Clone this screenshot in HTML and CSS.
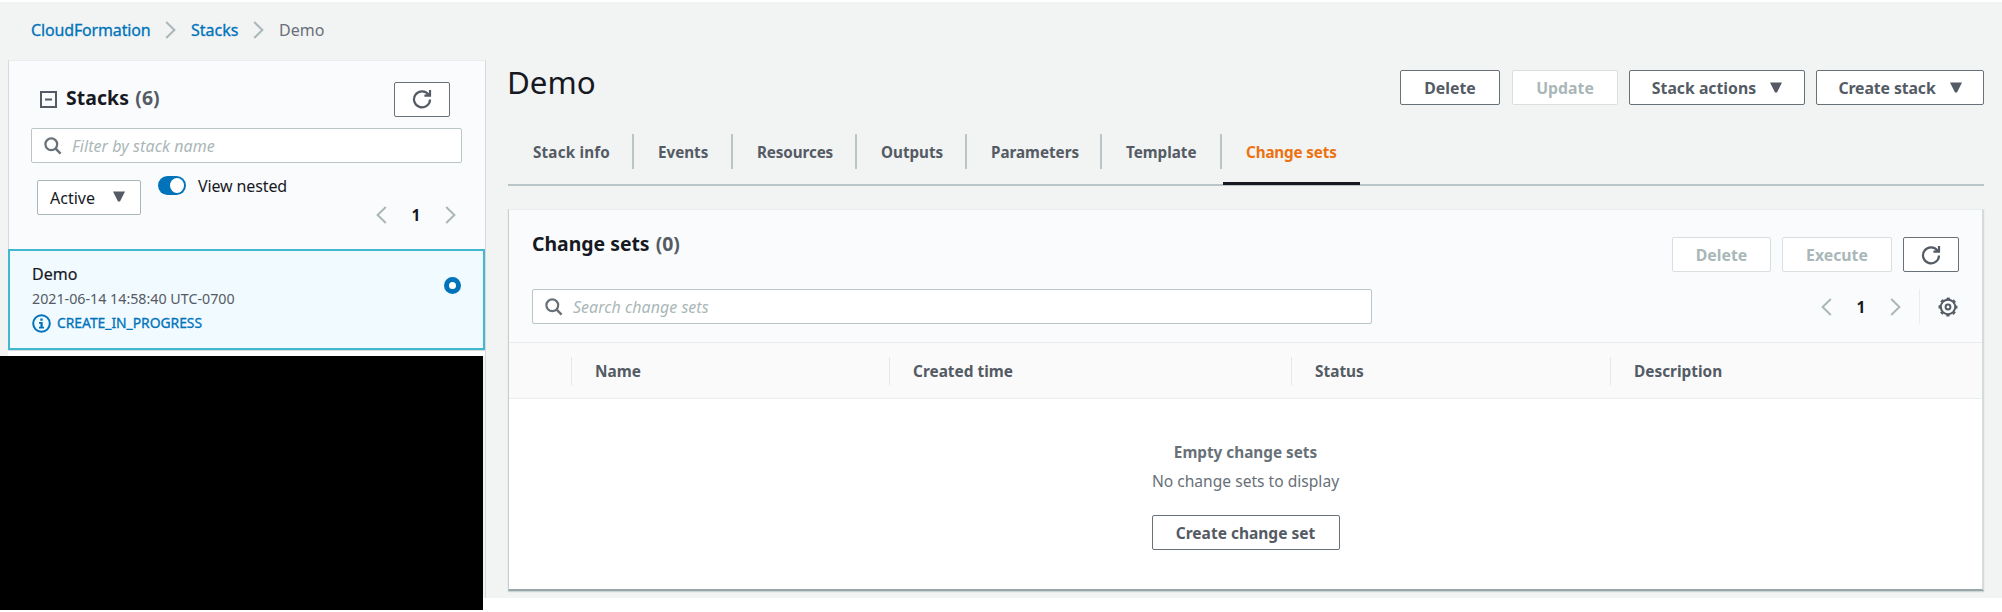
FILE: index.html
```html
<!DOCTYPE html>
<html lang="en">
<head>
<meta charset="utf-8">
<title>CloudFormation - Stack Demo</title>
<link rel="stylesheet" href="styles.css">
</head>
<body>
<svg width="0" height="0" class="defs">
  <symbol id="refresh" viewBox="0 0 20 20"><path d="M16.6 5.8A8 8 0 1 0 18 10.4M12.4 6.7H18V1" fill="none" stroke="currentColor" stroke-width="2.2"/></symbol>
  <symbol id="search" viewBox="0 0 18 18"><circle cx="7.3" cy="7.3" r="5.9" fill="none" stroke="currentColor" stroke-width="2.2"/><path d="M11.4 11.4l5.2 5.2" stroke="currentColor" stroke-width="2.4"/></symbol>
  <symbol id="left" viewBox="0 0 11 18"><path d="M9.8 1L1.6 9l8.2 8" fill="none" stroke="currentColor" stroke-width="2"/></symbol>
  <symbol id="right" viewBox="0 0 11 18"><path d="M1.2 1l8.2 8-8.2 8" fill="none" stroke="currentColor" stroke-width="2"/></symbol>
  <symbol id="caret" viewBox="0 0 12 11"><path d="M0 0.5h12L7 10.5H5z" fill="currentColor"/></symbol>
</svg>
<div class="page">
  <nav class="crumbs">
    <a class="cf">CloudFormation</a><svg class="chev"><use href="#right"/></svg><a class="st">Stacks</a><svg class="chev"><use href="#right"/></svg><span>Demo</span>
  </nav>
  <div class="columns">
    <aside class="sidebar">
      <div class="side-top">
        <div class="side-head">
          <svg class="collapse" viewBox="0 0 17 17"><path d="M1 1h15v15H1z" fill="none" stroke="currentColor" stroke-width="2"/><path d="M5 8.5h7" stroke="currentColor" stroke-width="2"/></svg>
          <h2>Stacks <span>(6)</span></h2>
          <button class="btn icon"><svg><use href="#refresh"/></svg></button>
        </div>
        <div class="input side-filter"><svg><use href="#search"/></svg><span>Filter by stack name</span></div>
        <div class="filters">
          <div class="select">Active<svg class="caret"><use href="#caret"/></svg></div>
          <div class="toggle"><i></i></div>
          <span class="nested">View nested</span>
          <div class="pager"><svg><use href="#left"/></svg><b>1</b><svg><use href="#right"/></svg></div>
        </div>
      </div>
      <div class="stack">
        <div>
          <div class="name">Demo</div>
          <div class="date">2021-06-14 14:58:40 UTC-0700</div>
          <div class="status"><svg viewBox="0 0 19 19"><circle cx="9.5" cy="9.5" r="8.3" fill="none" stroke="currentColor" stroke-width="2"/><path d="M8.3 4.5h2.4v2.2H8.3zM7 8h3.7v4.8H12v1.7H7v-1.7h1.4v-3H7z" fill="currentColor"/></svg>CREATE_IN_PROGRESS</div>
        </div>
        <div class="radio"></div>
      </div>
      <div class="next-stack"></div>
      <div class="redacted"></div>
    </aside>
    <main>
      <header>
        <h1>Demo</h1>
        <div class="actions">
          <button class="btn del">Delete</button>
          <button class="btn upd off">Update</button>
          <button class="btn sa">Stack actions<svg class="caret"><use href="#caret"/></svg></button>
          <button class="btn cs">Create stack<svg class="caret"><use href="#caret"/></svg></button>
        </div>
      </header>
      <div class="tabs">
        <a class="t1">Stack info</a><a class="t2">Events</a><a class="t3">Resources</a><a class="t4">Outputs</a><a class="t5">Parameters</a><a class="t6">Template</a><a class="active">Change sets</a>
      </div>
      <section class="panel">
        <div class="panel-top">
          <div class="panel-head">
            <h2>Change sets <span>(0)</span></h2>
            <div class="actions">
              <button class="btn del off">Delete</button>
              <button class="btn exe off">Execute</button>
              <button class="btn icon"><svg><use href="#refresh"/></svg></button>
            </div>
          </div>
          <div class="panel-tools">
            <div class="input main-search"><svg><use href="#search"/></svg><span>Search change sets</span></div>
            <div class="pager"><svg><use href="#left"/></svg><b>1</b><svg><use href="#right"/></svg></div>
            <div class="prefs"><svg viewBox="0 0 20 20" fill="none" stroke="currentColor"><circle cx="10" cy="10" r="7.2" stroke-width="2"/><circle cx="10" cy="10" r="8.6" stroke-width="1.7" stroke-dasharray="3.35 3.4" stroke-dashoffset="1.7"/><circle cx="10" cy="10" r="2.4" stroke-width="2"/></svg></div>
          </div>
        </div>
        <div class="thead"><div></div><div>Name</div><div>Created time</div><div>Status</div><div>Description</div></div>
        <div class="empty">
          <b>Empty change sets</b>
          <p>No change sets to display</p>
          <button class="btn create">Create change set</button>
        </div>
      </section>
    </main>
  </div>
</div>
</body>
</html>
```
FILE: styles.css
```css
* { box-sizing: border-box; }
html, body { height: 612px; overflow: hidden; }
body { margin: 0; padding-top: 2px; background: #fff; font: 16px/24px "Noto Sans", sans-serif; color: #16191f; }
.defs { position: absolute; }
svg { display: block; flex: none; }
h1, h2, p { margin: 0; }
.page { height: 610px; background: linear-gradient(#f2f3f3, #f2f3f3) top / 100% 596px no-repeat; }

.crumbs { display: flex; align-items: center; height: 58px; padding: 0 0 2px 31px; color: #687078; }
.crumbs a { color: #0073bb; -webkit-text-stroke: 0.3px #0073bb; }
.crumbs .cf { width: 134px; letter-spacing: -0.15px; }
.crumbs .st { width: 62px; }
.crumbs .chev { width: 11px; height: 18px; color: #aab7b8; margin: 0 15px 0 0; }

.columns { display: flex; align-items: flex-start; }
.sidebar { width: 485px; flex: none; }
.side-top { margin-left: 8px; width: 478px; height: 189px; background: #fafbfc; border: 1px solid #d5dbdb; border-bottom: 0; border-top-color: #eaeded; padding: 20px 23px 0 22px; }
.side-head { display: flex; align-items: center; height: 36px; padding: 0 12px 0 9px; }
.collapse { width: 17px; height: 17px; color: #545b64; margin-right: 9px; }
h2 { font-size: 19.4px; line-height: 26px; font-weight: 700; }
h2 span { color: #545b64; margin-left: 1px; }
.side-head h2 { flex: 1; letter-spacing: 0.1px; padding-bottom: 2px; }

.btn { height: 35px; padding: 0; display: flex; align-items: center; justify-content: center; border: 1.5px solid #687078; border-radius: 2px; background: #fff; color: #545b64; font: 700 15.8px/22px "Noto Sans", sans-serif; white-space: nowrap; }
.btn.off { color: #aab7b8; border-color: #d9dfdf; }
.btn.icon { width: 56px; }
.btn.icon svg { width: 20px; height: 20px; }
.btn .caret { margin-left: 14px; }
.caret { width: 12px; height: 11px; color: #545b64; }

.input { display: flex; align-items: center; height: 35px; border: 1.5px solid #b9c5c6; border-radius: 2px; background: #fff; color: #aab7b8; font-style: italic; }
.input svg { width: 18px; height: 18px; color: #687078; margin: 0 10px 0 12px; }
.side-filter { margin-top: 11px; letter-spacing: 0.08px; }
.filters { display: flex; align-items: flex-start; padding-left: 6px; margin-top: 12px; }
.select { margin-top: 5px; width: 104px; height: 35px; border: 1px solid #aab7b8; border-radius: 2px; background: #fff; display: flex; align-items: center; justify-content: space-between; padding: 0 15px 0 12px; }
.select .caret { margin-top: -2px; }
.toggle { width: 28px; height: 19px; border-radius: 10px; background: #0073bb; margin: 1px 0 0 17px; padding: 2px; display: flex; justify-content: flex-end; }
.toggle i { width: 14px; height: 15px; border-radius: 50%; background: #fff; }
.nested { margin: -1px 0 0 12px; letter-spacing: -0.12px; }
.pager { display: flex; align-items: center; color: #aab7b8; }
.pager svg { width: 11px; height: 18px; }
.pager b { width: 58px; text-align: center; color: #16191f; font-size: 15.5px; }
.filters .pager { margin: 28px 0 0 auto; padding-right: 6px; }

.stack { margin-left: 8px; width: 477px; height: 101px; border: 2px solid #40b8d0; background: #f1faff; padding: 11px 22px 0 22px; display: flex; justify-content: space-between; }
.name { line-height: 24px; -webkit-text-stroke: 0.2px #16191f; }
.date { font-size: 14.25px; line-height: 24px; color: #545b64; margin-top: 1px; }
.status { display: flex; align-items: center; gap: 6px; font-size: 13.9px; line-height: 24px; letter-spacing: -0.04px; color: #0073bb; -webkit-text-stroke: 0.3px #0073bb; }
.status svg { width: 19px; height: 19px; }
.radio { width: 17px; height: 17px; border: 5px solid #0073bb; border-radius: 50%; background: #fff; margin-top: 15px; }
.next-stack { margin-left: 8px; height: 6px; background: #fff; border-top: 1px solid #d5dbdb; }
.redacted { width: 483px; height: 254px; background: #000; }

main { width: 1499px; height: 538px; padding-left: 22px; border-left: 1px solid #d8d8de; }
header { display: flex; justify-content: space-between; height: 74px; padding-top: 10px; }
h1 { font-size: 31.3px; line-height: 44px; font-weight: 400; margin: -10px 0 0 -1px; }
.actions { display: flex; }
header .btn.del { width: 100px; }
.upd { width: 106px; margin: 0 11px 0 12px; }
.sa { width: 176px; margin-right: 11px; }
.cs { width: 168px; letter-spacing: -0.1px; }
.tabs { display: flex; height: 52px; border-bottom: 2px solid #b9c5c6; font-weight: 700; font-size: 15.2px; color: #545b64; }
.tabs a { height: 35px; line-height: 36px; padding-left: 24px; border-right: 2px solid #b9c5c6; }
.tabs .t1 { width: 126px; padding-left: 25px; letter-spacing: 0.2px; }
.tabs .t2 { width: 99px; }
.tabs .t3 { width: 124px; letter-spacing: -0.1px; }
.tabs .t4 { width: 110px; }
.tabs .t5 { width: 135px; }
.tabs .t6 { width: 120px; }
.tabs .active { width: 137px; height: 51px; margin-left: 1px; padding-left: 23px; border-right: 0; border-bottom: 3px solid #16191f; color: #ec7211; letter-spacing: -0.12px; }

.panel { margin-top: 23px; height: 382px; background: #fff; border: 1px solid #c5cfcf; border-top-color: #eaeded; border-right: 2px solid #d5dbdb; border-bottom: 2px solid #98a5a9; box-shadow: 0 1px 1px #cdd5d6; }
.panel-top { height: 133px; padding: 21px 23px 0 23px; background: #fafbfc; border-bottom: 1px solid #eaeded; }
.panel-head { display: flex; justify-content: space-between; height: 58px; }
.panel-head .actions { padding-top: 6px; }
.panel-head .del { width: 99px; }
.exe { width: 110px; margin: 0 11px; }
.panel-tools { display: flex; align-items: center; }
.main-search { width: 840px; margin-right: auto; }
.main-search span { letter-spacing: 0.02px; }
.prefs { height: 35px; width: 40px; margin-left: 18px; border-left: 1px solid #eaeded; padding: 8px 0 0 18px; }
.prefs svg { width: 20px; height: 20px; color: #545b64; }
.thead { display: grid; grid-template-columns: 63px 318px 402px 319px 1fr; height: 56px; padding-top: 14px; background: #fafafa; border-bottom: 1px solid #eaeded; color: #545b64; font-weight: 700; font-size: 15.4px; }
.thead div { height: 28px; line-height: 29px; padding-left: 23px; border-right: 1px solid #e3e8e8; }
.thead div:last-child { border-right: 0; }
.empty { display: flex; flex-direction: column; align-items: center; padding-top: 41px; color: #687078; font-size: 15.3px; }
.empty p { margin: 5px 0 22px; font-size: 15.6px; }
.create { width: 188px; font-size: 15.5px; }
```
